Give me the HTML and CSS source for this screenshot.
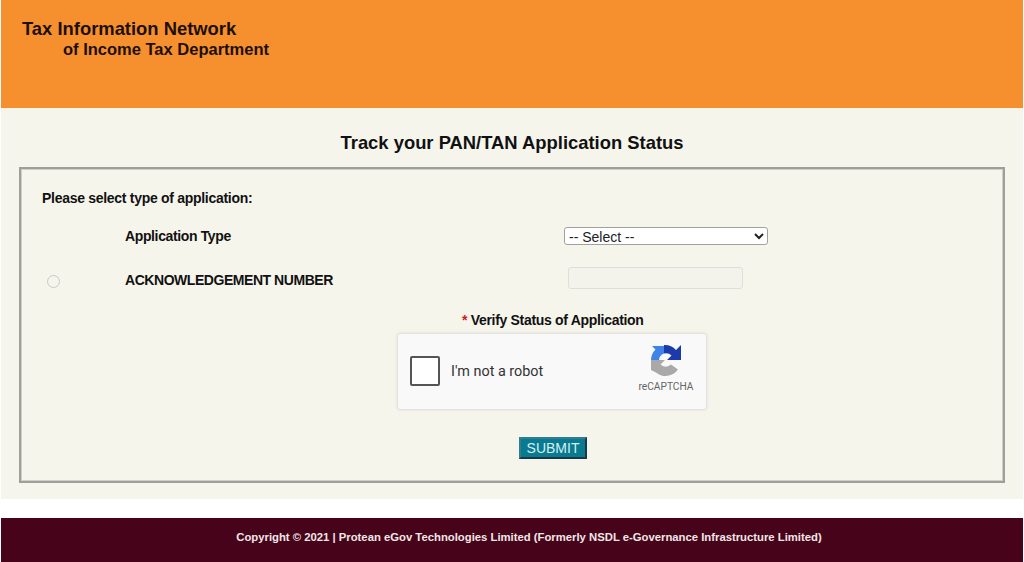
FILE: index.html
```html
<!DOCTYPE html>
<html lang="en">
<head>
<meta charset="utf-8">
<title>Track your PAN/TAN Application Status</title>
<link rel="stylesheet" href="styles.css">
</head>
<body>
<header class="banner">
  <div class="brand-1">Tax Information Network</div>
  <div class="brand-2">of Income Tax Department</div>
</header>
<main class="main">
  <h1 class="title">Track your PAN/TAN Application Status</h1>
  <form class="box">
    <div class="intro">Please select type of application:</div>
    <div class="row row-type">
      <span class="cell-radio"></span>
      <label class="label">Application Type</label>
      <select class="select"><option>-- Select --</option></select>
    </div>
    <div class="row row-ack">
      <span class="cell-radio"><span class="radio"></span></span>
      <label class="label label-caps">ACKNOWLEDGEMENT NUMBER</label>
      <span class="text-input"></span>
    </div>
    <div class="verify"><span class="star">*</span> Verify Status of Application</div>
    <div class="captcha">
      <span class="check"></span>
      <span class="robot">I'm not a robot</span>
      <div class="cap-logo">
        <svg class="cap-icon" viewBox="0 0 32 33" width="32" height="33">
          <path fill="#a9a9a9" d="M1 16H15L10.5 20.5A7.5 7.5 0 0 0 21 20.5L28 25.5A15 15 0 0 1 6 28.5L1 26Z"/>
          <path fill="#3f83e8" d="M1 16A15 15 0 0 1 5.5 5.5L2 2H14V9.5A7.5 7.5 0 0 0 9 16Z"/>
          <path fill="#1c3aa9" d="M14 1A15 15 0 0 1 26 6L31 1V16H17L21.5 11.5A7.5 7.5 0 0 0 14 9.5Z"/>
        </svg>
        <span class="cap-text">reCAPTCHA</span>
      </div>
    </div>
    <div class="actions"><button type="button" class="submit">SUBMIT</button></div>
  </form>
</main>
<footer class="footer">Copyright © 2021 | Protean eGov Technologies Limited (Formerly NSDL e-Governance Infrastructure Limited)</footer>
</body>
</html>
```
FILE: styles.css
```css
* { box-sizing: border-box; }
html, body { margin: 0; height: 562px; overflow: hidden; background: #fff; }
body {
  padding: 0 1px;
  font-family: "Liberation Sans", Arial, sans-serif;
  color: #111;
}
.banner {
  height: 108px;
  background: #f68f2e;
  padding: 18px 0 0 21px;
  font-weight: bold;
  color: #1d0f05;
}
.brand-1 { font-size: 18.4px; line-height: 21px; }
.brand-2 { font-size: 16.5px; line-height: 21px; padding-left: 41px; }
.main {
  height: 391px;
  background: #f6f5ec;
  padding: 24px 18px 0;
}
.title {
  margin: 0 0 14px;
  font-size: 18.4px;
  line-height: 21px;
  text-align: center;
  color: #111;
}
.box {
  height: 316px;
  border: 2px solid #9f9f9a;
  box-shadow: inset 0 0 0 1px #cfcfc8;
  padding: 20px 0 0 21px;
}
.intro { font-size: 14px; letter-spacing: -0.29px; font-weight: bold; line-height: 18px; }
.row {
  display: grid;
  grid-template-columns: 83px 439px 1fr;
  align-items: center;
  font-size: 14px;
  font-weight: bold;
}
.row-type { margin-top: 20px; height: 18px; }
.row-ack { margin-top: 21px; height: 28px; }
.label { line-height: 18px; letter-spacing: -0.37px; }
.label-caps { letter-spacing: -0.45px; }
.cell-radio { display: flex; padding-left: 5px; }
.radio {
  width: 13px;
  height: 13px;
  margin-top: 2px;
  border-radius: 50%;
  border: 1px solid #c9c9c4;
  background: #f6f5ec;
}
.select {
  width: 204px;
  height: 18px;
  font: 14px "Liberation Sans", Arial, sans-serif;
  color: #222;
  background: #fff;
  border: 1px solid #a2a29b;
  border-radius: 3px;
  padding: 0;
}
.text-input {
  display: block;
  width: 175px;
  height: 22px;
  margin: 0 0 4px 4px;
  background: #f4f3eb;
  border: 1px solid #dededa;
  border-radius: 3px;
}
.verify {
  margin-top: 17px;
  padding-left: 420px;
  font-size: 14px;
  letter-spacing: -0.31px;
  font-weight: bold;
  line-height: 18px;
}
.star { color: #c8221f; }
.captcha {
  display: flex;
  align-items: center;
  width: 310px;
  height: 77px;
  margin: 4px 0 0 355px;
  background: #f9f9f9;
  border: 1px solid #e3e3e0;
  border-radius: 3px;
  box-shadow: 0 0 3px rgba(0, 0, 0, .1);
  padding: 0 0 0 12px;
}
.check {
  width: 30px;
  height: 30px;
  margin-bottom: 2px;
  background: #fff;
  border: 2px solid #555;
  border-radius: 2px;
}
.robot {
  margin-left: 11px;
  font: 14.4px Roboto, Arial, sans-serif;
  color: #333;
}
.cap-logo {
  display: flex;
  flex-direction: column;
  align-items: center;
  align-self: flex-start;
  margin-left: auto;
  margin-right: 5px;
  width: 70px;
  padding-top: 10px;
}
.cap-icon { display: block; }
.cap-text {
  margin-top: 4px;
  font: 10.2px/12px Roboto, Arial, sans-serif;
  color: #666;
}
.actions { margin-top: 27px; padding-left: 477px; }
.submit {
  display: block;
  width: 68px;
  height: 22px;
  padding: 0 0 2px;
  background: #0a7a90;
  border: 2px solid;
  border-color: #2f7d90 #183a48 #183a48 #2f7d90;
  font: 14px/18px "Liberation Sans", Arial, sans-serif;
  color: #d4f0f4;
}
.footer {
  height: 44px;
  margin-top: 19px;
  padding-left: 34px;
  background: #46031a;
  color: #f1e7e6;
  font-size: 11.3px;
  font-weight: bold;
  line-height: 39px;
  text-align: center;
}
```
